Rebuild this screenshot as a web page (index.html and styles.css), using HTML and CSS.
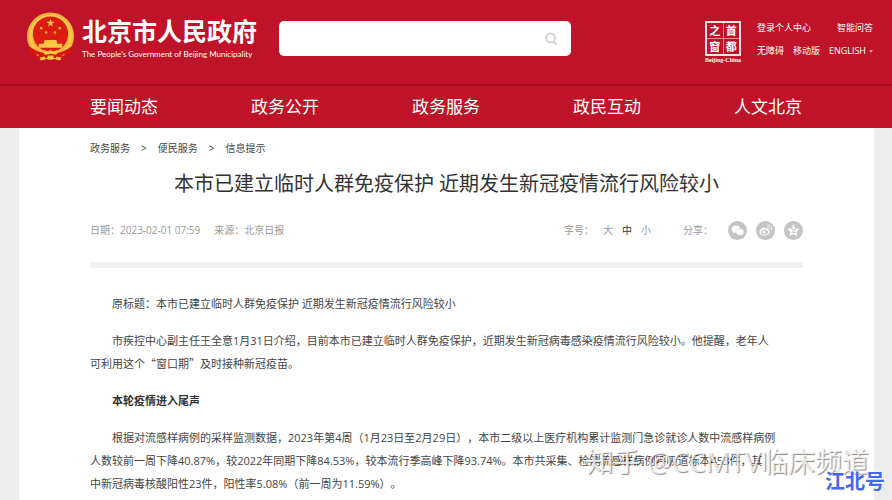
FILE: index.html
```
<!DOCTYPE html>
<html lang="zh-CN">
<head>
    <meta charset="UTF-8">
    <meta name="viewport" content="width=device-width, initial-scale=1.0">
    <title>北京市人民政府</title>
    <link rel="stylesheet" href="styles.css">
</head>
<body>
    <header class="header">
        <div class="header-top">
            <a class="logo" href="#">
                <svg class="emblem" viewBox="0 0 50 50" aria-hidden="true">
                    <path d="M4 33 L4 41 L10 43 L11 49 L25 46 L39 49 L40 43 L46 41 L46 33 Z" fill="#d9140f"/>
                    <circle cx="25" cy="24" r="24" fill="#f6b73c"/>
                    <circle cx="25" cy="24" r="20.5" fill="none" stroke="#fbc850" stroke-width="2"/>
                    <circle cx="25" cy="22" r="18" fill="#dc1b12"/>
                    <path d="M25 6.500l1 3h3.200l-2.600 1.900 1 3.100-2.600-1.900-2.600 1.900 1-3.100-2.600-1.900H24z" fill="#fbc740"/>
                    <g fill="#f6a63a">
                        <circle cx="15.500" cy="16" r="1.400"/>
                        <circle cx="34.500" cy="16" r="1.400"/>
                        <circle cx="20.500" cy="20.500" r="1.400"/>
                        <circle cx="29.500" cy="20.500" r="1.400"/>
                    </g>
                    <path d="M19 28h12l1 4h5v4H13v-4h5z" fill="#fbc740"/>
                    <path d="M9 33l8 7 8 1 8-1 8-7-1 8-15 5-15-5z" fill="#f6b73c"/>
                    <path d="M4 35q8 6 17 7l4-3 4 3q9-1 17-7l-1 7-8 1 1 6-13-4-13 4 1-6-8-1z" fill="#d9140f"/>
                    <path d="M17 38l5 2 3-2 3 2 5-2-2 5-6-1-6 1zM14 46l5-1 1 3-5 1zM36 46l-5-1-1 3 5 1zM22 44h6v4h-6z" fill="#fbc740"/>
                </svg>
                <span class="logo-text">
                    <span class="logo-cn">北京市人民政府</span>
                    <span class="logo-en">The People's Government of Beijing Municipality</span>
                </span>
            </a>
            <form class="search">
                <input class="search-input" type="text" aria-label="搜索">
                <button class="search-btn" type="button" aria-label="搜索">
                    <svg viewBox="0 0 14 14" width="14" height="14" fill="none" stroke="#d2d2d2" stroke-width="1.800">
                        <circle cx="6.500" cy="6" r="4.500"/>
                        <path d="M9.500 9.500l3 3"/>
                    </svg>
                </button>
            </form>
            <a class="seal" href="#">
                <span class="seal-grid">
                    <span>之</span><span>首</span>
                    <span>窗</span><span>都</span>
                </span>
                <span class="seal-name">Beijing-China</span>
            </a>
            <div class="tools">
                <div class="tools-row">
                    <a href="#">登录个人中心</a>
                    <a href="#">智能问答</a>
                </div>
                <div class="tools-row">
                    <a href="#">无障碍</a>
                    <a href="#">移动版</a>
                    <a class="lang" href="#">ENGLISH <span class="arrow"></span></a>
                </div>
            </div>
        </div>
        <nav class="nav">
            <a href="#">要闻动态</a>
            <a href="#">政务公开</a>
            <a href="#">政务服务</a>
            <a href="#">政民互动</a>
            <a href="#">人文北京</a>
        </nav>
    </header>

    <main class="article">
        <div class="crumbs">
            <a href="#">政务服务</a>
            <span>&gt;</span>
            <a href="#">便民服务</a>
            <span>&gt;</span>
            <a href="#">信息提示</a>
        </div>
        <h1 class="title">本市已建立临时人群免疫保护 近期发生新冠疫情流行风险较小</h1>
        <div class="meta">
            <span class="date">日期：2023-02-01 07:59</span>
            <span>来源：北京日报</span>
            <div class="sizes">
                <span>字号：</span>
                <button type="button">大</button>
                <button type="button" class="active">中</button>
                <button type="button">小</button>
            </div>
            <div class="share">
                <span>分享：</span>
                <a href="#" aria-label="微信">
                    <svg viewBox="0 0 19 19">
                        <circle cx="9.500" cy="9.500" r="9.500" fill="#c4c4c4"/>
                        <path d="M8 4.500c-2.600 0-4.500 1.600-4.500 3.600 0 1.200.6 2.100 1.600 2.800l-.4 1.600 1.800-1c.5.1 1 .2 1.500.2 2.600 0 4.500-1.600 4.500-3.600S10.600 4.500 8 4.500z" fill="#fff"/>
                        <path d="M12 7.700c-2.400 0-4.200 1.500-4.200 3.300s1.800 3.300 4.200 3.300c.5 0 1-.1 1.400-.2l1.500.9-.4-1.500c.9-.6 1.500-1.500 1.500-2.500 0-1.800-1.700-3.300-4-3.300z" fill="#fff" stroke="#c4c4c4" stroke-width=".5"/>
                    </svg>
                </a>
                <a href="#" aria-label="微博">
                    <svg viewBox="0 0 19 19">
                        <circle cx="9.500" cy="9.500" r="9.500" fill="#c4c4c4"/>
                        <path d="M8.600 6.200c-1.500-.6-5.200 2.400-5.200 4.900 0 2 2.400 3.300 5.100 3.300 3.200 0 5.400-1.800 5.400-3.500 0-1.200-1-1.700-1.800-1.900.5-1.300-.6-1.900-2.800-1.200.2-.8 0-1.300-.7-1.600z" fill="#fff"/>
                        <ellipse cx="8.500" cy="11.200" rx="3.500" ry="2.300" fill="#c4c4c4"/>
                        <circle cx="8" cy="11.300" r="1.400" fill="#fff"/>
                        <path d="M11.500 4.200c2.800-.4 4.600 1.700 4 4.300M11.700 6.200c1.400-.1 2.200.8 2 2" fill="none" stroke="#fff" stroke-linecap="round"/>
                    </svg>
                </a>
                <a href="#" aria-label="QQ空间">
                    <svg viewBox="0 0 19 19">
                        <circle cx="9.500" cy="9.500" r="9.500" fill="#c4c4c4"/>
                        <path d="M9.500 3.300l1.900 3.900 4.300.6-3.100 3 .7 4.300-3.800-2-3.800 2 .7-4.300-3.100-3 4.300-.6z" fill="#fff"/>
                        <path d="M7.200 8.300l4.200.1-3.700 3 4.300.1" fill="none" stroke="#c4c4c4" stroke-width=".9"/>
                    </svg>
                </a>
            </div>
        </div>
        <div class="content">
            <p>原标题：本市已建立临时人群免疫保护 近期发生新冠疫情流行风险较小</p>
            <p>市疾控中心副主任王全意1月31日介绍，目前本市已建立临时人群免疫保护，近期发生新冠病毒感染疫情流行风险较小。他提醒，老年人<br>可利用这个<span class="quote">“窗口期”</span>及时接种新冠疫苗。</p>
            <p><strong>本轮疫情进入尾声</strong></p>
            <p>根据对流感样病例的采样监测数据，2023年第4周（1月23日至2月29日），本市二级以上医疗机构累计监测门急诊就诊人数中流感样病例<br>人数较前一周下降40.87%，较2022年同期下降84.53%，较本流行季高峰下降93.74%。本市共采集、检测流感样病例呼吸道标本453件，其<br>中新冠病毒核酸阳性23件，阳性率5.08%（前一周为11.59%）。</p>
        </div>
    </main>

    <div class="watermark">知乎 @CCMTV临床频道</div>
    <div class="badge">江北号</div>
</body>
</html>
```
FILE: styles.css
```
* {
    box-sizing: border-box;
}
body {
    margin: 0;
    min-height: 100vh;
    display: flex;
    flex-direction: column;
    position: relative;
    background: #ececec;
    color: #444;
    font-family: "Open Sans", "Noto Sans CJK SC", sans-serif;
    font-size: 11px;
}
a {
    color: inherit;
    text-decoration: none;
}
button {
    padding: 0;
    border: none;
    background: none;
    color: inherit;
    font: inherit;
    cursor: pointer;
}

/* Header */
.header {
    background: #be1328;
    color: #fff;
}
.header-top {
    display: flex;
    align-items: flex-start;
    height: 86px;
    padding: 12px 19px 0 26px;
    border-bottom: 2px solid #a90f20;
}
.logo {
    display: flex;
    gap: 7px;
}
.emblem {
    width: 49px;
    height: 50px;
}
.logo-text {
    display: flex;
    flex-direction: column;
    width: 176px;
    padding-top: 4px;
    white-space: nowrap;
}
.logo-cn {
    font-size: 25px;
    font-weight: bold;
    line-height: 30px;
}
.logo-en {
    font-family: Lato, sans-serif;
    font-size: 8px;
    line-height: 16px;
}
.search {
    display: flex;
    align-items: center;
    width: 292px;
    height: 35px;
    margin: 9px 0 0 21px;
    padding-right: 13px;
    background: #fff;
    border-radius: 5px;
}
.search-input {
    flex: 1;
    min-width: 0;
    height: 100%;
    padding: 0 12px;
    border: none;
    background: none;
    outline: none;
}
.search-btn {
    display: flex;
}
.seal {
    display: flex;
    flex-direction: column;
    align-items: center;
    width: 40px;
    margin: 9px 14px 0 auto;
}
.seal-grid {
    display: grid;
    grid-template-columns: 1fr 1fr;
    gap: 1px;
    width: 36px;
    height: 35px;
    border: 2px solid #fbdfe2;
    background: #e88d97;
    font-size: 11px;
    font-weight: bold;
    line-height: 15px;
    text-align: center;
}
.seal-grid span {
    background: #be1328;
}
.seal-name {
    font-family: "Liberation Serif", serif;
    font-size: 6px;
    font-weight: bold;
    line-height: 8px;
}
.tools {
    display: flex;
    flex-direction: column;
    gap: 7px;
    width: 116px;
    padding-top: 8px;
    font-size: 9px;
    line-height: 16px;
    white-space: nowrap;
}
.tools-row {
    display: flex;
    justify-content: space-between;
}
.lang {
    display: flex;
    align-items: center;
    gap: 3px;
}
.arrow {
    border: 2px solid transparent;
    border-top: 3px solid #f08d97;
    border-bottom: 0;
}
.nav {
    display: flex;
    justify-content: space-between;
    padding: 0 90px;
    font-size: 17px;
    line-height: 42px;
}

/* Article */
.article {
    flex: 1;
    margin: 0 18px 0 19px;
    padding: 10px 71px 0;
    background: #fff;
}
.crumbs {
    display: flex;
    gap: 11px;
    font-size: 10px;
    line-height: 20px;
}
.title {
    margin: 11px 0 21px;
    color: #333;
    font-size: 20px;
    font-weight: normal;
    line-height: 30px;
    text-align: center;
    white-space: nowrap;
}
.meta {
    display: flex;
    align-items: center;
    padding-bottom: 22px;
    border-bottom: 6px solid #f1f1f1;
    color: #999;
    font-size: 10px;
    line-height: 20px;
    white-space: nowrap;
}
.date {
    margin-right: 14px;
}
.sizes {
    display: flex;
    gap: 9px;
    margin-left: auto;
}
.sizes .active {
    color: #333;
}
.share {
    display: flex;
    align-items: center;
    gap: 9px;
    margin-left: 32px;
}
.share span {
    margin-right: 6px;
}
.share a {
    display: flex;
    width: 19px;
    height: 19px;
}
.content {
    padding-top: 24px;
    line-height: 23px;
    white-space: nowrap;
    text-spacing-trim: space-all;
}
.content p {
    margin: 0 0 14px;
    text-indent: 2em;
}
.content p:last-child {
    margin-bottom: 0;
}
.content strong {
    color: #333;
}
.quote {
    font-family: "Noto Sans CJK SC", sans-serif;
}

/* Marks over the page */
.watermark {
    position: absolute;
    right: 23px;
    bottom: 20px;
    color: rgba(255, 255, 255, 0.8);
    font-size: 27px;
    line-height: 36px;
    text-shadow: 1px 1px 1px rgba(0, 0, 0, 0.45);
    white-space: nowrap;
}
.badge {
    position: absolute;
    right: 7px;
    bottom: 5px;
    color: #4468f0;
    font-size: 20px;
    font-weight: bold;
    line-height: 26px;
    text-shadow: 0 0 2px #fff;
}
```
